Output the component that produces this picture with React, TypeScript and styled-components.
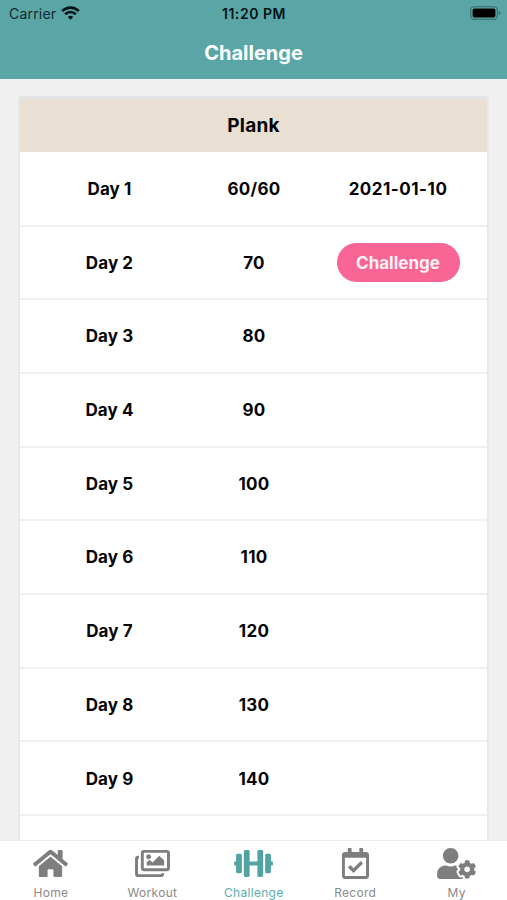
import React from "react";
import styled, { createGlobalStyle } from "styled-components";
import type { IconType } from "react-icons";
import { FaHome, FaRegImages, FaDumbbell, FaRegCalendarCheck, FaUserCog } from "react-icons/fa";

const GlobalStyle = createGlobalStyle`
  * { box-sizing: border-box; }
  body {
    margin: 0;
    overflow: hidden;
    font-family: Inter, "Liberation Sans", sans-serif;
  }
`;

const Screen = styled.div`
  display: flex;
  flex-direction: column;
  height: 900px;
  background: #f0f0f0;
  color: #050505;
`;

const Header = styled.header`
  flex: none;
  height: 79px;
  background: #5aa6a7;
`;

const StatusBar = styled.div`
  display: grid;
  grid-template-columns: 1fr auto 1fr;
  align-items: center;
  height: 27px;
  padding: 0 6px 0 9px;
  font-size: 14px;
  line-height: 27px;
`;

const Carrier = styled.div`
  display: flex;
  align-items: center;
  gap: 5px;
  color: #10292d;
  letter-spacing: 0.2px;

  svg {
    margin-top: -2px;
  }
`;

const Clock = styled.div`
  padding-right: 2px;
  color: #031214;
  font-weight: 600;
  letter-spacing: 0.55px;
`;

const Battery = styled.svg`
  justify-self: end;
  margin-top: -1px;
`;

const Title = styled.h1`
  margin: 0;
  height: 51px;
  color: #fafefe;
  font-size: 20px;
  font-weight: 700;
  line-height: 52px;
  text-align: center;
`;

const Content = styled.main`
  flex: 1;
  min-height: 0;
  overflow: hidden;
  padding: 17px 18px 0;
`;

const Card = styled.section`
  border: 2px solid #e7e8e9;
  border-top: 3px solid #e4e5e7;
  border-radius: 3px 3px 0 0;
  background: #fff;
`;

const CardTitle = styled.h2`
  margin: 0;
  height: 53px;
  background: #e9dfd3;
  font-size: 19px;
  font-weight: 700;
  line-height: 54px;
  letter-spacing: 0.2px;
  text-align: center;
`;

const Row = styled.div`
  display: grid;
  grid-template-columns: 179px 110px 178px;
  align-items: center;
  height: 73.7px;
  padding-top: 0.6px;
  border-bottom: 2px solid #f0f0f0;
  font-size: 17px;
  font-weight: 700;

  &:nth-of-type(1) {
    height: 74.6px;
  }
`;

const Cell = styled.div<{ $tracking?: number }>`
  letter-spacing: ${({ $tracking = 0.1 }) => $tracking}px;
  text-align: center;
  white-space: nowrap;
`;

const ChallengeButton = styled.button`
  display: block;
  width: 123px;
  height: 39px;
  margin: 0 auto;
  padding: 1px 0 0;
  border: 0;
  border-radius: 20px;
  background: #f96594;
  color: #fff2f7;
  font: inherit;
`;

const TabBar = styled.nav`
  flex: none;
  display: grid;
  grid-template-columns: repeat(5, 1fr);
  height: 60px;
  border-top: 1px solid #ececec;
  background: #fff;
`;

const Tab = styled.a<{ $active: boolean; $iconWidth: number }>`
  display: flex;
  flex-direction: column;
  align-items: center;
  padding: 6.5px 0 0 0.6px;
  color: ${({ $active }) => ($active ? "#51a3a4" : "#7e7e7e")};

  svg {
    flex: none;
    display: block;
    overflow: visible;
    width: ${({ $iconWidth }) => $iconWidth}px;
    height: 31px;
  }
`;

const TabLabel = styled.span<{ $active: boolean }>`
  margin-top: 6.5px;
  color: ${({ $active }) => ($active ? "#5bada9" : "#8a8a8a")};
  font-size: 12px;
  line-height: 16px;
  letter-spacing: 0.3px;
`;

interface Day {
  goal: string;
  date?: string;
  open?: boolean;
}

const days: Day[] = [
  { goal: "60/60", date: "2021-01-10" },
  { goal: "70", open: true },
  { goal: "80" },
  { goal: "90" },
  { goal: "100" },
  { goal: "110" },
  { goal: "120" },
  { goal: "130" },
  { goal: "140" },
];

const tabs: { label: string; icon: IconType; width: number }[] = [
  { label: "Home", icon: FaHome, width: 35 },
  { label: "Workout", icon: FaRegImages, width: 35 },
  { label: "Challenge", icon: FaDumbbell, width: 39 },
  { label: "Record", icon: FaRegCalendarCheck, width: 27 },
  { label: "My", icon: FaUserCog, width: 39 },
];

function WifiIcon() {
  return (
    <svg width="19" height="14" viewBox="0 0 19 14" fill="none" stroke="#031214" strokeWidth="2.7">
      <path d="M1.2 5.1a11.8 11.8 0 0 1 16.6 0" />
      <path d="M4.2 8.2a7.5 7.5 0 0 1 10.6 0" />
      <path d="M9.5 13.7 6.8 11a3.8 3.8 0 0 1 5.4 0Z" fill="#031214" stroke="none" />
    </svg>
  );
}

function BatteryIcon() {
  return (
    <Battery width="31" height="14" viewBox="0 0 31 14">
      <rect x="0.7" y="0.7" width="26.6" height="12.6" rx="3.6" fill="none" stroke="#37696a" strokeWidth="1.1" />
      <rect x="2.6" y="2.5" width="22.8" height="9" rx="1.8" fill="#000" />
      <path d="M28.6 5c2.4.6 2.4 3.4 0 4Z" fill="#37747a" />
    </Battery>
  );
}

export default function App() {
  return (
    <Screen>
      <GlobalStyle />
      <Header>
        <StatusBar>
          <Carrier>
            Carrier
            <WifiIcon />
          </Carrier>
          <Clock>11:20 PM</Clock>
          <BatteryIcon />
        </StatusBar>
        <Title>Challenge</Title>
      </Header>
      <Content>
        <Card>
          <CardTitle>Plank</CardTitle>
          {days.map((day, index) => (
            <Row key={day.goal}>
              <Cell>Day {index + 1}</Cell>
              <Cell $tracking={0.25}>{day.goal}</Cell>
              <Cell $tracking={day.date ? 0.5 : 0.1}>
                {day.date}
                {day.open && <ChallengeButton>Challenge</ChallengeButton>}
              </Cell>
            </Row>
          ))}
          <Row />
        </Card>
      </Content>
      <TabBar>
        {tabs.map(({ label, icon: Icon, width }) => {
          const active = label === "Challenge";
          return (
            <Tab key={label} $active={active} $iconWidth={width}>
              <Icon />
              <TabLabel $active={active}>{label}</TabLabel>
            </Tab>
          );
        })}
      </TabBar>
    </Screen>
  );
}
